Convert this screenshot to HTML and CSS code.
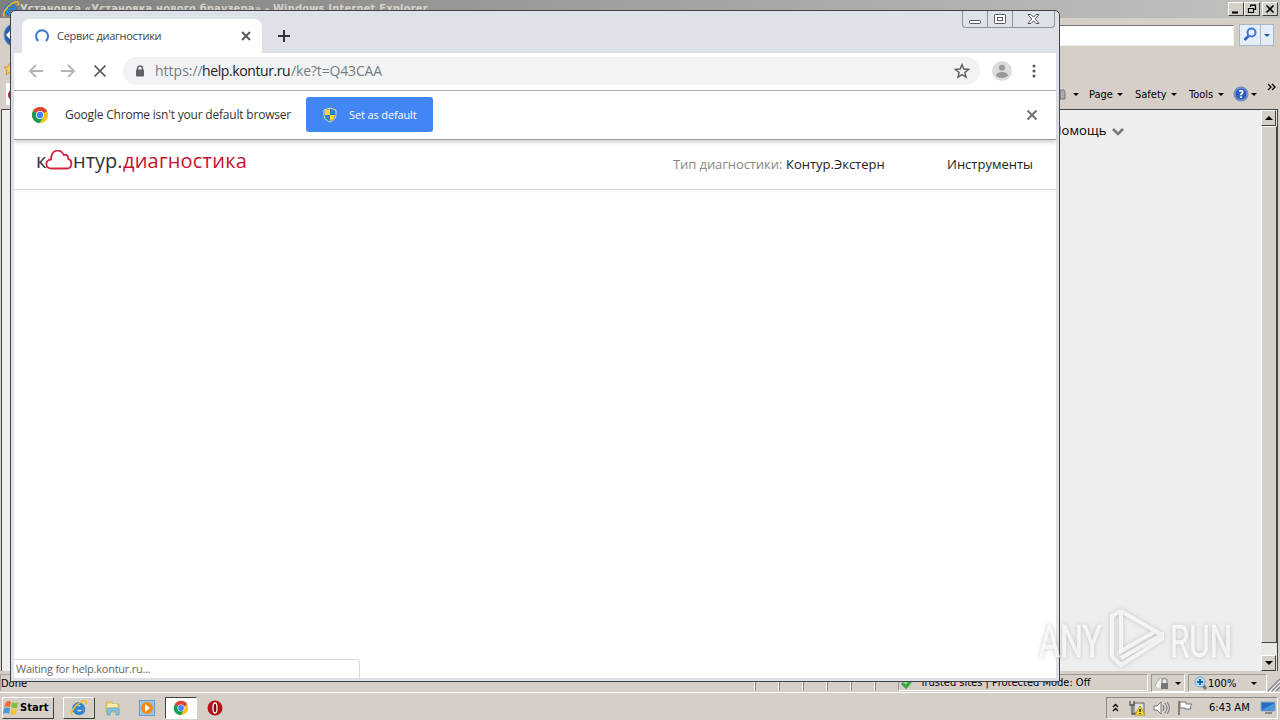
FILE: index.html
```html
<!DOCTYPE html>
<html lang="ru">
<head>
    <meta charset="UTF-8">
    <meta name="viewport" content="width=device-width, initial-scale=1.0">
    <title>Сервис диагностики</title>
    <link rel="stylesheet" href="styles.css">
</head>
<body>
    <svg class="defs" width="0" height="0">
        <symbol id="ie" viewBox="0 0 20 20">
            <path d="M16.500 11.500H7c.2 3.500 5 4 6.200 1.500h3.300C14.500 19.500 3 18.500 3 10.500S15.500 1 16.500 11.500zM7 8.500h5.800C12.300 5.200 7.600 5.200 7 8.500z" fill="#2b8de0" stroke="#1261ad" stroke-width=".7" fill-rule="evenodd"/>
            <path d="M3 18C-1 17 5 7 12 3.500 18 .5 19.500 2 17.500 6" fill="none" stroke="#f0bd28" stroke-width="1.700"/>
        </symbol>
        <symbol id="chrome" viewBox="0 0 20 20">
            <circle cx="10" cy="10" r="9" fill="#fbc116"/>
            <path d="M10 10 2.200 5.500A9 9 0 0 1 17.800 5.500z" fill="#db4437"/>
            <path d="M17.800 5.500H10V10z" fill="#db4437"/>
            <path d="M2.200 5.500A9 9 0 0 0 9.500 19L13.900 12.200 10 10z" fill="#0f9d58"/>
            <circle cx="10" cy="10" r="4.500" fill="#fff"/>
            <circle cx="10" cy="10" r="3.600" fill="#4285f4"/>
        </symbol>
    </svg>

    <!-- Internet Explorer -->
    <div class="ie">
        <div class="ie-title">
            <svg class="ie-logo" width="18" height="18"><use href="#ie"/></svg>
            <span class="ie-name">Установка «Установка нового браузера» - Windows Internet Explorer</span>
            <div class="ie-controls">
                <b><svg width="14" height="12"><path d="M3 9.500h6" stroke="#000" stroke-width="2"/></svg></b>
                <b><svg width="14" height="12"><path d="M5.500 4V2.500h5v4H9M5 2h6M3.500 5.500h5v4h-5zM3 5.500h6" fill="none" stroke="#000" stroke-width="1.200"/></svg></b>
                <b class="ie-close"><svg width="14" height="12"><path d="m3.500 2.500 7 7m0-7-7 7" stroke="#000" stroke-width="1.700"/></svg></b>
            </div>
        </div>
        <div class="ie-address">
            <svg class="ie-back" width="28" height="28"><circle cx="14" cy="14" r="12" fill="#2462b1" stroke="#8394ac"/><path d="m12 8-6 6 6 6M6 14h14" fill="none" stroke="#fff" stroke-width="3"/></svg>
            <div class="ie-input"></div>
            <div class="ie-search">
                <span class="search-icon"><svg width="20" height="19"><circle cx="11.500" cy="7.500" r="4" fill="#e4f2ff" stroke="#3e78d5" stroke-width="2"/><path d="m8.500 11-4 4" stroke="#315fc0" stroke-width="2.500"/></svg></span>
                <span class="search-arrow"><i class="tri blue"></i></span>
            </div>
        </div>
        <div class="ie-menu">
            <svg class="ie-star" width="12" height="14"><path d="m6 1 2 4h4L9 8l1 5-4-3-4 3 1-5-3-3h4z" fill="#f6d164" stroke="#c79b2b"/></svg>
            <span class="ie-tab"><i></i></span>
            <svg class="ie-print" width="6" height="12"><path d="M0 1h4l1 2v7H0z" fill="#aaa" stroke="#777"/></svg>
            <i class="tri print-tri"></i>
            <span class="menu-page">Page</span><i class="tri"></i>
            <span class="menu-safety">Safety</span><i class="tri"></i>
            <span class="menu-tools">Tools</span><i class="tri"></i>
            <svg class="ie-help" width="16" height="16"><circle cx="8" cy="8" r="7" fill="#2859bd" stroke="#7188b5"/><circle cx="8" cy="8" r="6" fill="none" stroke="#adc4ec" stroke-width=".7"/><text x="8" y="12" text-anchor="middle">?</text></svg>
            <i class="tri help-tri"></i>
            <svg class="ie-more" width="9" height="9"><path d="m1 1 3 3-3 3m4-6 3 3-3 3" fill="none" stroke="#000" stroke-width="1.300"/></svg>
        </div>
        <div class="ie-view">
            <div class="ie-page"><span>Помощь</span><svg width="14" height="10"><path d="m2 2 5 5 5-5" fill="none" stroke="#777" stroke-width="2.600"/></svg></div>
            <div class="scrollbar">
                <b><i class="tri up"></i></b>
                <div class="thumb"></div>
                <div class="track"></div>
                <b><i class="tri down"></i></b>
            </div>
        </div>
        <div class="ie-status">
            <span class="status-done">Done</span>
            <span class="cell"></span><span class="cell"></span><span class="cell"></span><span class="cell"></span><span class="cell"></span><span class="cell"></span>
            <span class="trusted"><svg width="15" height="15"><circle cx="7" cy="7" r="5" fill="#9ddc91"/><path d="m2 7 4 4 6-8" fill="none" stroke="#3da548" stroke-width="3"/></svg><span>Trusted sites | Protected Mode: Off</span></span>
            <span class="privacy"><svg width="20" height="16"><path d="M3 12c1-4 3-8 7-9l3 3-4 7" fill="#eee" stroke="#aaa"/><path d="M10 8V5q2.500-3 5 0v3" fill="#eee" stroke="#999" stroke-width="1.500"/><path d="M9 8h7v6H9z" fill="#777"/></svg><i class="tri"></i></span>
            <span class="zoom"><svg width="14" height="15"><path d="m8 8 4 5" stroke="#777" stroke-width="3"/><circle cx="6" cy="6" r="5" fill="#b9dcf5" stroke="#75a8d6"/><path d="M6 3v6M3 6h6" stroke="#1768b4" stroke-width="2"/></svg><span>100%</span><i class="tri"></i></span>
            <svg class="grip" width="12" height="15"><path d="M0 14 12 2M4 14l8-8M8 14l4-4" stroke="#888" stroke-width="1.500"/><path d="M1 15 12 4M5 15l7-7" stroke="#fff"/></svg>
        </div>
    </div>

    <!-- Chrome -->
    <div class="chrome">
        <div class="tabs">
            <div class="tab">
                <svg width="16" height="16"><path d="M4.300 12.900A6 6 0 1 1 11.800 12.900" fill="none" stroke="#3b78d8" stroke-width="2"/></svg>
                <span>Сервис диагностики</span>
                <svg class="tab-close" width="10" height="10"><path d="m1 1 8 8m0-8-8 8" stroke="#555" stroke-width="1.800"/></svg>
            </div>
            <svg class="new-tab" width="14" height="14"><path d="M7 1v12M1 7h12" stroke="#303238" stroke-width="2"/></svg>
            <div class="win-controls">
                <span><svg width="15" height="14"><rect x="1.500" y="9.500" width="11" height="3" rx="1" fill="#fff" stroke="#555966"/></svg></span>
                <span><svg width="15" height="14"><rect x="1.500" y="3.500" width="11" height="9" rx="1" fill="#fff" stroke="#555966"/><rect x="4.500" y="6.500" width="5" height="3" fill="#fff" stroke="#555966"/></svg></span>
                <span><svg width="15" height="14"><path d="M2 3.500h3l2.500 2.700L10 3.500h3L9.200 8l3.800 4.500h-3L7.500 9.800 5 12.500H2L5.800 8z" fill="#fff" stroke="#555966"/></svg></span>
            </div>
        </div>
        <div class="toolbar">
            <svg class="nav-back" width="16" height="16"><path d="M15 8H2m6-6L2 8l6 6" fill="none" stroke="#b5b5b5" stroke-width="1.800"/></svg>
            <svg class="nav-forward" width="16" height="16"><path d="M1 8h13M8 2l6 6-6 6" fill="none" stroke="#b5b5b5" stroke-width="1.800"/></svg>
            <svg class="nav-stop" width="14" height="14"><path d="m1.500 1.500 11 11m0-11-11 11" stroke="#555" stroke-width="1.700"/></svg>
            <div class="omnibox">
                <svg width="10" height="12"><path d="M2.500 5V3.500a2.500 2.500 0 0 1 5 0V5" fill="none" stroke="#5f6368" stroke-width="1.500"/><rect x="1" y="4.500" width="8" height="7" rx="1" fill="#5f6368"/></svg>
                <span class="url"><span class="u1">https://</span><span class="host">help.kontur.ru</span><span class="u3">/ke?t=Q43CAA</span></span>
                <svg class="star" width="16" height="16"><path d="m8 1.800 1.800 4.300 4.700.4-3.600 3 1.100 4.600L8 11.600l-4 2.500 1.100-4.600-3.600-3 4.700-.4z" fill="none" stroke="#5f6368" stroke-width="1.500"/></svg>
            </div>
            <svg class="avatar" width="20" height="20"><circle cx="10" cy="10" r="10" fill="#dcdcdc"/><circle cx="10" cy="6.800" r="3" fill="#999"/><ellipse cx="10" cy="14" rx="6" ry="3" fill="#999"/></svg>
            <svg class="dots" width="4" height="14"><circle cx="2" cy="2" r="1.500"/><circle cx="2" cy="7" r="1.500"/><circle cx="2" cy="12" r="1.500"/></svg>
        </div>
        <div class="infobar">
            <svg width="18" height="18"><use href="#chrome"/></svg>
            <span class="info-text">Google Chrome isn't your default browser</span>
            <button class="default-btn">
                <svg width="14" height="16"><path d="M7 1 1 3v4.500C1 11 3 13.500 7 15c4-1.500 6-4 6-7.500V3z" fill="#2588c8" stroke="#eee2b3"/><path d="M7 2v6H2V3.500zm0 6h5c-.3 3-2 4.800-5 6z" fill="#ffd43b"/></svg>
                <span>Set as default</span>
            </button>
            <svg class="info-close" width="12" height="12"><path d="m1.500 1.500 9 9m0-9-9 9" stroke="#707070" stroke-width="2"/></svg>
        </div>
        <div class="site-header">
            <div class="logo">
                <span class="l1">к</span><svg width="28" height="20"><path d="M7 18.500C-.5 18.500-.2 10 6 9.500 6.200-1.500 16-1.500 18.800 5c3-1 4.800 1.500 4.300 3.700 5.200 2 3.700 9.800-1.100 9.800z" fill="none" stroke="#d22540" stroke-width="1.800"/></svg><span class="l2">нтур.</span><span class="red">диагностика</span>
            </div>
            <div class="type"><span class="muted">Тип диагностики:</span><span class="product">Контур.Экстерн</span></div>
            <span class="instruments">Инструменты</span>
        </div>
        <div class="page">
            <div class="bubble">Waiting for help.kontur.ru...</div>
        </div>
    </div>

    <!-- Taskbar -->
    <div class="taskbar">
        <div class="start"><svg width="17" height="18"><path d="M3 3q3-2 5 0L7 8Q4 7 1 8z" fill="#ef7138"/><path d="M9 3q3 2 6 0l-1 6q-3 1-6-1z" fill="#85bd42"/><path d="M1 9q3-1 6 0l-1 6q-3-2-6 0z" fill="#4b96da"/><path d="M8 9q3 2 6 1l-1 5q-3 2-6 0z" fill="#f3c43b"/></svg><span>Start</span></div>
        <div class="task ie-task"><svg width="18" height="18"><use href="#ie"/></svg></div>
        <svg class="explorer" width="18" height="18"><path d="M2 3h6l1 2h6v8H2z" fill="#ecd783" stroke="#c7b262"/><path d="M4 5h9v3H4z" fill="#f8edb0"/><path d="M3 16v-5q0-2 2-2h8q2 0 2 2v5h-3v-4H6v4z" fill="#80c3e3" stroke="#5d9bba" stroke-width=".7"/></svg>
        <svg class="player" width="16" height="16"><rect x=".5" y=".5" width="15" height="15" fill="#9ac6ea" stroke="#6a9dcc"/><circle cx="8" cy="8" r="6" fill="#f08a18"/><path d="m6 4 5 4-5 4z" fill="#fff"/></svg>
        <div class="task active"><svg width="16" height="16"><use href="#chrome"/></svg></div>
        <svg class="opera" width="16" height="16"><circle cx="8" cy="8" r="7.500" fill="#b51218"/><ellipse cx="8" cy="8" rx="2" ry="5" fill="#7b080b" stroke="#fff" stroke-width="1.300"/></svg>
        <div class="tray">
            <svg class="tray-up" width="7" height="10"><path d="m1 4 2.500-2.500L6 4M1 8l2.500-2.500L6 8" fill="none" stroke="#000" stroke-width="1.400"/></svg>
            <svg class="network" width="17" height="16"><path d="M5 3h10v10H5z" fill="#ddd" stroke="#666"/><path d="M1 1v4h4V1M3 5v9h5" fill="none" stroke="#555" stroke-width="1.300"/><path d="m11 6 5 9H6z" fill="#ffe12c" stroke="#b29619"/><path d="M11 9v3m0 1v1" stroke="#000" stroke-width="1.300"/></svg>
            <svg class="sound" width="18" height="16"><path d="M1 6h3l4-4v12l-4-4H1z" fill="#fff" stroke="#777"/><path d="M10 5q2 3 0 6m2-8q4 5 0 10m2-11q5 6 0 12" fill="none" stroke="#777"/></svg>
            <svg class="flag" width="17" height="16"><path d="M2 1v14" stroke="#666" stroke-width="1.500"/><path d="M3 2h6v2h6l-2 3 1 2H8V8H3z" fill="#fff" stroke="#777"/></svg>
            <span class="clock">6:43 AM</span>
            <svg class="desktop" width="16" height="13"><path d="M1 1h14v9H1z" fill="#246cc0" stroke="#8baac9"/><path d="m2 9 12-7v7z" fill="#4a96dd"/><path d="M5 12h7" stroke="#345" /></svg>
        </div>
    </div>

    <svg class="watermark" width="210" height="70" viewBox="0 0 210 70">
        <g class="wm-text"><text x="3" y="50" textLength="63" lengthAdjust="spacingAndGlyphs">ANY</text><text x="134" y="50" textLength="62" lengthAdjust="spacingAndGlyphs">RUN</text></g>
        <path d="M85 4 126 28 M85 4V44L118 25M76 50V9l9-5M76 50l9 8 41-26V28L85 51" fill="none"/>
    </svg>
</body>
</html>
```
FILE: styles.css
```css
* {
    box-sizing: border-box;
}

body {
    margin: 0;
    width: 1280px;
    height: 720px;
    overflow: hidden;
    position: relative;
    background: #d4d0c8;
    color: #000;
    font: 11px/14px "DejaVu Sans Condensed", "DejaVu Sans", sans-serif;
    font-stretch: condensed;
    white-space: nowrap;
}

svg {
    display: block;
    flex: none;
}

.defs {
    position: absolute;
}

.tri {
    flex: none;
    width: 0;
    height: 0;
    border: 3px solid transparent;
    border-top-color: #000;
    border-bottom: 0;
}

.tri.blue {
    border-top-color: #245ba7;
}

.tri.up {
    border-top: 0;
    border-bottom: 4px solid #000;
    border-left-width: 4px;
    border-right-width: 4px;
}

.tri.down {
    border-width: 4px 4px 0;
}

/* Internet Explorer */
.ie {
    position: absolute;
    left: 0;
    top: 0;
    width: 1280px;
    height: 693px;
    background: #d5cfc8;
    display: flex;
    flex-direction: column;
}

.ie-title {
    height: 18px;
    flex: none;
    display: flex;
    background: linear-gradient(90deg, #808080, #c3c1be);
    padding-left: 2px;
}

.ie-name {
    margin: 2px 0 0;
    color: #d4d0c8;
    font-weight: bold;
    letter-spacing: 0.21px;
}

.ie-controls {
    display: flex;
    margin: 2px 2px 0 auto;
}

.ie-controls b, .scrollbar b {
    display: flex;
    align-items: center;
    justify-content: center;
    width: 16px;
    height: 14px;
    background: #d4d0c8;
    border: 1px solid;
    border-color: #fff #404040 #404040 #fff;
}

.ie-controls .ie-close {
    margin-left: 2px;
}

.ie-address {
    height: 40px;
    flex: none;
    display: flex;
}

.ie-back {
    margin: 3px 0 0 2px;
}

.ie-input {
    flex: 1;
    height: 21px;
    margin: 7px 5px 0 0;
    background: #fff;
    border: 1px solid #777;
    border-right-color: #eee;
    border-bottom-color: #eee;
}

.ie-search {
    display: flex;
    width: 35px;
    height: 22px;
    margin: 6px 6px 0 0;
    border: 1px solid #a8b7c9;
    background: #e4edf8;
}

.search-icon {
    width: 21px;
    border-right: 1px solid #a8b7c9;
}

.search-arrow {
    flex: 1;
    display: flex;
    align-items: center;
    justify-content: center;
}

.ie-menu {
    height: 51px;
    flex: none;
    display: flex;
    align-items: flex-start;
    padding: 30px 0 0 4px;
}

.ie-menu .tri {
    margin: 5px 0 0 4px;
}

.ie-star {
    margin: -26px 0 0;
}

.ie-menu .ie-tab {
    width: 14px;
    height: 22px;
    margin: -5px 0 0 -10px;
    background: #fff;
    overflow: hidden;
}

.ie-tab i {
    display: block;
    width: 12px;
    height: 12px;
    margin: 6px 0 0 2px;
    border-radius: 50%;
    background: #a32635;
}

.ie-menu .ie-print {
    margin: 1px 0 0 1040px;
}

.ie-menu .print-tri {
    margin-left: 7px;
}

.menu-page {
    width: 24px;
    margin-left: 10px;
}

.menu-safety {
    width: 32px;
    margin-left: 12px;
}

.menu-tools {
    width: 25px;
    margin-left: 12px;
}

.ie-help {
    margin: -2px 0 0 9px;
}

.ie-help text {
    fill: #fff;
    font-weight: bold;
}

.ie-menu .help-tri {
    margin-left: 2px;
}

.ie-more {
    margin: -5px 0 0 10px;
}

.ie-view {
    flex: none;
    height: 562px;
    display: flex;
    margin: 0 2px 0 1px;
    border: 1px solid #444;
    border-width: 1px 1px 0 1px;
    background: #eee;
}

.ie-page {
    flex: 1;
    display: flex;
    padding: 11px 0 0 1050px;
    font: 13px/18px "Open Sans", sans-serif;
}

.ie-page span {
    width: 55px;
    letter-spacing: 0.1px;
}

.ie-page svg {
    margin: 6px 0 0 4px;
}

.scrollbar {
    width: 16px;
    display: flex;
    flex-direction: column;
    background: #eae8e4;
}

.scrollbar b {
    width: 15px;
    height: 16px;
}

.thumb {
    height: 517px;
    background: #d4d0c8;
    border: 1px solid;
    border-color: #fff #404040 #404040 #fff;
}

.track {
    flex: 1;
}

.ie-status {
    height: 22px;
    flex: none;
    display: flex;
    padding-top: 3px;
}

.status-done {
    width: 754px;
    height: 17px;
    padding: 2px 0 0 0;
    border: 1px solid #aaa59f;
    border-width: 1px 0 0 1px;
}

.cell {
    width: 24px;
    height: 17px;
    border-left: 1px solid #fff;
    box-shadow: inset 1px 0 #888;
}

.trusted {
    display: flex;
    width: 250px;
    height: 17px;
    border: 1px solid #999;
    border-color: #999 #fff #fff #999;
}

.trusted svg {
    margin: 1px 0 0 1px;
}

.trusted span {
    margin: 1px 0 0 5px;
}

.privacy, .zoom {
    display: flex;
    align-items: center;
    height: 18px;
    margin-left: 3px;
    border: 1px solid #999;
    border-color: #999 #fff #fff #999;
}

.privacy {
    width: 34px;
}

.privacy .tri {
    margin-left: 3px;
}

.zoom {
    width: 79px;
    padding-left: 5px;
}

.zoom span {
    width: 31px;
    padding-top: 1px;
}

.zoom .tri {
    margin-left: 12px;
}

.grip {
    margin: 3px 0 0 1px;
}

/* Chrome */
.chrome {
    position: absolute;
    left: 10px;
    top: 10px;
    width: 1050px;
    height: 672px;
    display: flex;
    flex-direction: column;
    padding: 0 3px 3px;
    border: 1px solid #414349;
    border-radius: 5px 5px 0 0;
    background: #dee1e8;
    font-family: "Open Sans", sans-serif;
    font-stretch: normal;
}

.tabs {
    height: 42px;
    flex: none;
    display: flex;
}

.tab {
    display: flex;
    align-items: center;
    width: 240px;
    height: 34px;
    margin: 8px 0 0 8px;
    padding: 0 11px 0 12px;
    border-radius: 8px 8px 0 0;
    background: #fff;
    color: #444;
}

.tab span {
    margin-left: 7px;
    letter-spacing: -0.27px;
}

.tab-close {
    margin-left: auto;
}

.new-tab {
    margin: 18px 0 0 15px;
}

.win-controls {
    display: flex;
    width: 93px;
    height: 17px;
    margin: 0 1px 0 auto;
    border: 1px solid #8c919f;
    border-top: 0;
    border-radius: 0 0 4px 4px;
}

.win-controls span {
    display: flex;
    justify-content: center;
    width: 25px;
    border-right: 1px solid #8c919f;
}

.win-controls span:last-child {
    flex: 1;
    border: 0;
}

.toolbar {
    height: 38px;
    flex: none;
    display: flex;
    align-items: center;
    padding: 0 0 1px 14px;
    border-bottom: 1px solid #a5a5a5;
    background: #fff;
}

.nav-forward {
    margin-left: 16px;
}

.nav-stop {
    margin-left: 17px;
}

.omnibox {
    display: flex;
    align-items: center;
    width: 857px;
    height: 28px;
    margin-left: 16px;
    padding: 0 10px 0 12px;
    border-radius: 14px;
    background: #f1f3f4;
    color: #777c80;
    font-size: 14px;
    line-height: 20px;
}

.url {
    display: flex;
    margin-left: 10px;
}

.u1 {
    width: 47px;
}

.host {
    width: 89px;
    color: #202124;
    letter-spacing: -0.4px;
}

.u3 {
    letter-spacing: -0.15px;
}

.star {
    margin-left: auto;
}

.avatar {
    margin-left: 12px;
}

.dots {
    margin-left: 20px;
    fill: #555;
}

.infobar {
    position: relative;
    height: 49px;
    flex: none;
    display: flex;
    align-items: center;
    padding: 0 18px 1px 17px;
    border-bottom: 1px solid #999;
    box-shadow: 0 2px 4px #ccc;
    background: #fff;
    color: #333;
    font-size: 12px;
}

.info-text {
    width: 230px;
    margin-left: 16px;
    letter-spacing: -0.2px;
}

.default-btn {
    display: flex;
    align-items: center;
    width: 127px;
    height: 35px;
    margin-left: 11px;
    padding: 0 0 0 17px;
    border: 0;
    border-radius: 3px;
    background: #4285f4;
    color: #fff;
    font: 11px "Open Sans", sans-serif;
}

.default-btn span {
    margin-left: 12px;
    letter-spacing: -0.13px;
}

.info-close {
    margin-left: auto;
}

.site-header {
    height: 50px;
    flex: none;
    display: flex;
    align-items: flex-start;
    padding: 0 0 0 22px;
    border-bottom: 1px solid #d5d5d5;
    background: #fff;
    font-size: 13px;
    line-height: 20px;
}

.logo {
    display: flex;
    width: 637px;
    margin-top: 9px;
    font-size: 20px;
    line-height: 24px;
    color: #333;
}

.logo .red {
    color: #c8102e;
    letter-spacing: 0.2px;
}

.l1 {
    width: 9px;
}

.l2 {
    width: 50px;
}

.logo svg {
    margin-top: 1px;
}

.type {
    display: flex;
    width: 274px;
    margin-top: 14px;
}

.muted {
    width: 113px;
    color: #888;
    letter-spacing: -0.08px;
}

.product, .instruments {
    color: #222;
}

.instruments {
    margin-top: 14px;
}

.page {
    flex: 1;
    display: flex;
    align-items: flex-end;
    background: linear-gradient(#f9f9f9, #fff 6px);
}

.bubble {
    width: 346px;
    height: 19px;
    padding: 2px 0 0 2px;
    border: 1px solid #d9d9d9;
    border-width: 1px 1px 0 0;
    border-radius: 0 4px 0 0;
    color: #666;
    letter-spacing: -0.24px;
}

/* Taskbar */
.taskbar {
    position: absolute;
    left: 0;
    top: 692px;
    width: 1280px;
    height: 28px;
    display: flex;
    align-items: center;
    padding: 2px 2px 0;
    border-top: 1px solid #fff;
    background: #d5cfc8;
}

.start, .task {
    display: flex;
    align-items: center;
    height: 22px;
    border: 1px solid;
    border-color: #fff #404040 #404040 #fff;
}

.start {
    width: 52px;
    font-weight: bold;
}

.start span {
    letter-spacing: 0.1px;
}

.task {
    width: 32px;
    justify-content: center;
}

.ie-task {
    margin-left: 9px;
}

.explorer {
    margin-left: 9px;
}

.player {
    margin-left: 17px;
}

.active {
    margin-left: 10px;
    background: #fff;
    border-color: #404040 #fff #fff #404040;
}

.opera {
    margin-left: 10px;
}

.tray {
    display: flex;
    align-items: center;
    width: 172px;
    height: 22px;
    margin-left: auto;
    padding-left: 5px;
    border: 1px solid;
    border-color: #888 #fff #fff #888;
}

.network {
    margin-left: 10px;
}

.sound {
    margin-left: 7px;
}

.flag {
    margin-left: 6px;
}

.clock {
    width: 42px;
    margin-left: 15px;
}

.desktop {
    margin-left: 9px;
}

.watermark {
    position: absolute;
    left: 1036px;
    top: 607px;
    overflow: visible;
    stroke: rgba(255, 255, 255, 0.75);
    stroke-width: 4px;
    filter: drop-shadow(0 0 2px rgba(120, 120, 120, 0.5));
}

.wm-text {
    font: 45px Roboto, sans-serif;
    font-stretch: normal;
    fill: rgba(255, 255, 255, 0.75);
    stroke: rgba(255, 255, 255, 0.4);
    stroke-width: 1px;
}
```
